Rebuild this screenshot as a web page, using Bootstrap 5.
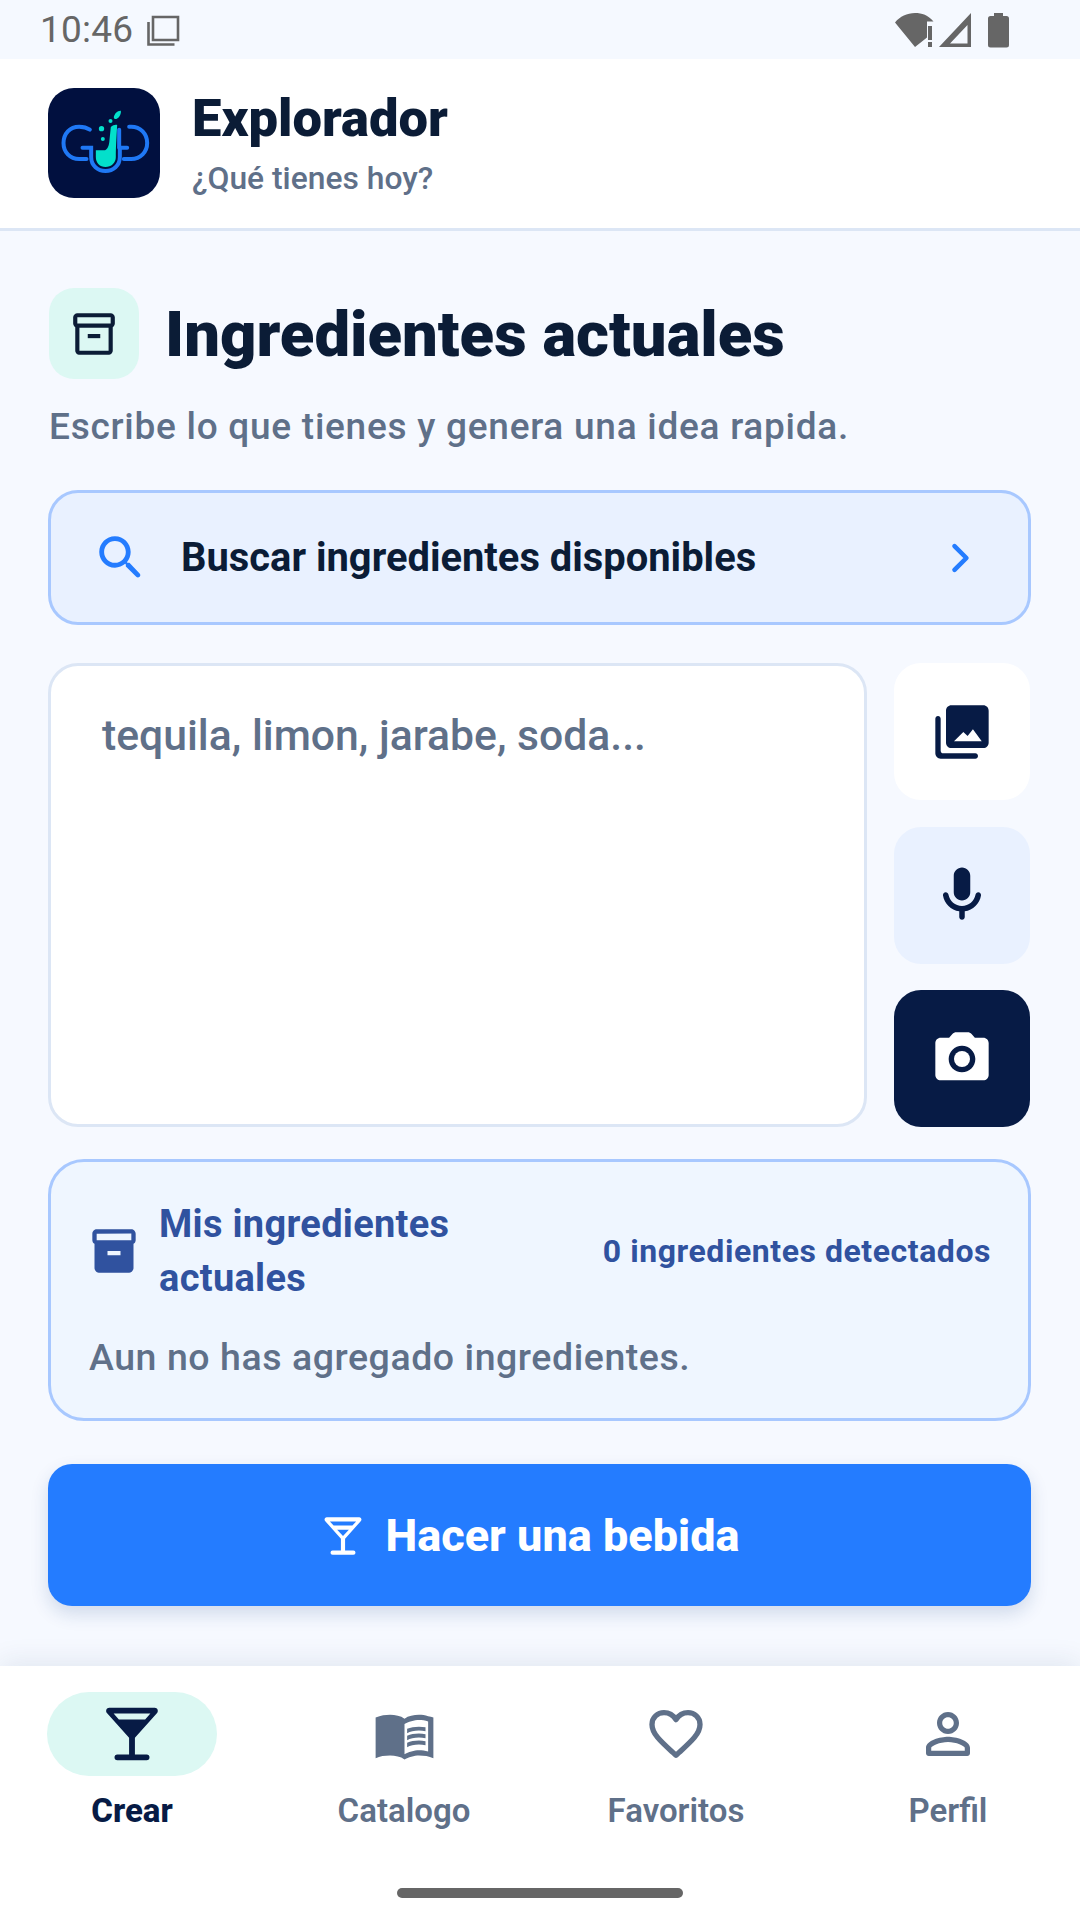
<!DOCTYPE html>
<html lang="es">
<head>
<meta charset="utf-8">
<title>Explorador</title>
<link href="https://cdn.jsdelivr.net/npm/bootstrap@5.3.0/dist/css/bootstrap.min.css" rel="stylesheet">
<style>
html,body{margin:0;height:1920px;overflow:hidden}
body{background:#f6f9ff;font-family:Roboto,"Noto Sans",sans-serif;color:#0b1c36}
svg{display:block;flex:none}
.screen{width:1080px;height:1920px}
.status-row{height:59px;background:#f5f9ff;color:#666;padding:0 71px 0 40px}
.status-time{font-size:37px;line-height:36px;margin-right:13px;letter-spacing:.2px}
.top-bar{height:172px;background:#fff;border-bottom:3px solid #dce6f5;padding:0 48px 0 48px;gap:32px}
.logo-box{width:112px;height:110px;border-radius:26px;background:#01103f;margin-top:-2px}
.top-title{font-size:52.500px;font-weight:900;line-height:60px;color:#0b1c36;margin:-3px 0 12px}
.top-sub{font-size:31.800px;font-weight:500;line-height:36px;color:#5f7089}
.work{padding:57px 49px 0 48px}
.head-ico{width:90px;height:91px;border-radius:25px;background:#dcf8f3;margin-left:1px}
.head-title{font-size:63.400px;font-weight:900;line-height:70px;color:#0b1c36;margin:0 0 0 26px}
.head-sub{font-size:37px;font-weight:500;line-height:44px;color:#5f7089;margin:26px 0 0 1px;letter-spacing:.74px}
.find-row{height:135px;margin-top:41px;padding:0 46px 0 41px;border:3px solid #a8c8ff;border-radius:30px;background:#e9f1ff}
.find-label{font-size:39.900px;font-weight:700;color:#0b1c36;margin-left:31px}
.input-row{margin-top:38px;gap:27px;height:464px}
.idea-input{width:819px;height:464px;border:3px solid #dce6f5;border-radius:30px;background:#fff;padding:45px 51px;font-size:42.700px;font-weight:500;line-height:48px;color:#5f7089;resize:none;box-shadow:none}
.idea-input::placeholder{color:#5f7089;opacity:1}
.tool-col{width:136px;height:464px;justify-content:space-between}
.tool-btn{width:136px;height:137px;padding:0;border:0;border-radius:27px}
.tool-a{background:#fff}
.tool-b{background:#e9f1ff}
.tool-c{background:#071b45}
.info-box{height:262px;margin-top:32px;border:3px solid #a8c8ff;border-radius:36px;background:#eff6ff;padding:35px 37px 0 37px}
.info-title{width:362px;font-size:38px;font-weight:700;line-height:54px;color:#30529f;margin-left:19px;letter-spacing:.3px}
.info-count{font-size:32px;font-weight:700;color:#30529f;letter-spacing:.55px}
.info-empty{font-size:37.500px;font-weight:500;line-height:44px;color:#5f7089;margin:30px 0 0 1px;letter-spacing:.55px}
.make-btn{height:142px;margin-top:43px;width:100%;border:0;border-radius:24px;background:#247cff;color:#fff;font-size:45px;font-weight:800;gap:18px;padding:1px 22px 0 0;box-shadow:0 8px 18px rgba(20,60,130,.16)}
.make-btn:hover,.make-btn:active{background:#247cff!important;color:#fff!important}
.tab-bar{height:254px;background:#fff;box-shadow:0 -4px 26px rgba(15,40,90,.09);padding-top:26px;position:relative;overflow:hidden}
.tab-grid{display:grid;grid-template-columns:repeat(4,272px);width:1088px;margin-left:-4px}
.tab-ico{height:84px;width:100%}
.tab-pill{width:170px;background:#dcf8f3;border-radius:42px}
.tab-name{font-size:33px;font-weight:600;line-height:40px;color:#5f7089;margin-top:15px}
.tab-on{color:#071b45;font-weight:800}
.home-line{position:absolute;left:397px;top:222px;width:286px;height:10px;border-radius:5px;background:#666}
</style>
</head>
<body>
<div class="screen d-flex flex-column">
  <div class="status-row d-flex align-items-center">
    <span class="status-time">10:46</span>
    <svg width="34" height="34" viewBox="0 0 34 34" fill="none" stroke="#666" stroke-width="2.6"><path d="M7 4h25v23H7z"/><path d="M2.500 9v22.500h26"/></svg>
    <div class="ms-auto d-flex align-items-center">
      <svg width="77" height="36" viewBox="0 0 77 36" fill="#666"><path d="M0 10.500C5 4.500 12 1 20 1c7 0 13 2 18.500 8.500H32V25.500L20 35z"/><rect x="33" y="14" width="4" height="14"/><rect x="33" y="30" width="4" height="5"/><path fill-rule="evenodd" d="M44 35L76 1v34zM55 31.500h17.500V13z"/></svg>
      <svg class="ms-3" width="21" height="36" viewBox="0 0 21 36" fill="#666"><path d="M6 1h9v3h3.500A2.500 2.500 0 0 1 21 6.500V33a2.500 2.500 0 0 1-2.500 2.500h-16A2.500 2.500 0 0 1 0 33V6.500A2.500 2.500 0 0 1 2.500 4H6z"/></svg>
    </div>
  </div>

  <header class="top-bar d-flex align-items-center">
    <div class="logo-box d-flex align-items-center justify-content-center">
      <svg width="112" height="110" viewBox="25 25 335 330" fill="none">
        <g stroke="#1f78f5" stroke-width="12" stroke-linecap="round">
          <path d="M150 150C140 143 128 141 118 141C90 141 71 163 71 190C71 217 90 238 118 238H140"/>
          <path d="M268 141H274C302 141 322 163 322 190C322 217 302 238 274 238H252"/>
          <path d="M128 204H154V232C154 258 174 274 197 274C220 274 240 258 240 232V204H262"/>
          <path d="M238 150V204"/>
        </g>
        <path fill="#03e0cb" d="M168 212H192C203 212 208 198 209 180L213 142C219 136 228 134 232 136L229 190C228 210 228 222 228 232C228 250 214 262 197 262C180 262 168 250 168 232z"/>
        <path fill="#03e0cb" d="M222 112C223 103 233 92 243 93C245 104 236 118 226 118C223 118 222 115 222 112z"/>
        <circle cx="212" cy="124" r="6" fill="#03e0cb"/><circle cx="185" cy="147" r="8" fill="#03e0cb"/><circle cx="189" cy="178" r="6" fill="#03e0cb"/>
      </svg>
    </div>
    <div>
      <h1 class="top-title">Explorador</h1>
      <div class="top-sub">¿Qué tienes hoy?</div>
    </div>
  </header>

  <main class="work flex-grow-1">
    <div class="d-flex align-items-center">
      <div class="head-ico d-flex align-items-center justify-content-center">
        <svg width="50" height="50" viewBox="0 0 24 24" fill="#0b1c36"><path d="M20 2H4c-1 0-2 .9-2 2v3.010c0 .72.43 1.340 1 1.690V20c0 1.100 1.100 2 2 2h14c.9 0 2-.9 2-2V8.700c.57-.35 1-.97 1-1.690V4c0-1.100-1-2-2-2zm-1 18H5V9h14v11zm1-13H4V4h16v3z"/><path d="M9 12h6v2H9z"/></svg>
      </div>
      <h2 class="head-title">Ingredientes actuales</h2>
    </div>
    <p class="head-sub">Escribe lo que tienes y genera una idea rapida.</p>

    <div class="find-row d-flex align-items-center">
      <svg width="58" height="58" viewBox="0 0 24 24" fill="#247cff"><path d="M15.500 14h-.79l-.28-.27C15.410 12.590 16 11.110 16 9.500 16 5.910 13.090 3 9.500 3S3 5.910 3 9.500 5.910 16 9.500 16c1.610 0 3.090-.59 4.230-1.570l.27.28v.79l4.300 4.290c.39.39 1.010.39 1.400 0 .39-.39.39-1.010 0-1.400L15.500 14zm-6 0C7.010 14 5 11.990 5 9.500S7.010 5 9.500 5 14 7.010 14 9.500 11.990 14 9.500 14z"/></svg>
      <span class="find-label">Buscar ingredientes disponibles</span>
      <svg class="ms-auto" width="44" height="44" viewBox="0 0 24 24" fill="none" stroke="#247cff" stroke-width="2.500" stroke-linecap="round" stroke-linejoin="round"><path d="M9 5.500l6.500 6.500L9 18.500"/></svg>
    </div>

    <div class="input-row d-flex">
      <textarea class="idea-input form-control" placeholder="tequila, limon, jarabe, soda..."></textarea>
      <div class="tool-col d-flex flex-column">
        <button class="tool-btn tool-a btn d-flex align-items-center justify-content-center" type="button" aria-label="Galeria">
          <svg width="64" height="64" viewBox="0 0 24 24" fill="#071b45"><path fill-rule="evenodd" d="M8 2h12c1.100 0 2 .9 2 2v12c0 1.100-.9 2-2 2H8c-1.100 0-2-.9-2-2V4c0-1.100.9-2 2-2zM9 15.500h10.400l-3.300-4.500-2 2.500-1.600-1.500z"/><path d="M3 6c.55 0 1 .45 1 1v12c0 .55.45 1 1 1h12c.55 0 1 .45 1 1s-.45 1-1 1H4c-1.100 0-2-.9-2-2V7c0-.55.45-1 1-1z"/></svg>
        </button>
        <button class="tool-btn tool-b btn d-flex align-items-center justify-content-center" type="button" aria-label="Microfono">
          <svg width="66" height="66" viewBox="0 0 24 24" fill="#071b45"><path d="M12 14c1.660 0 3-1.340 3-3V5c0-1.660-1.340-3-3-3S9 3.340 9 5v6c0 1.660 1.340 3 3 3zm5.910-3c-.49 0-.9.360-.98.850C16.520 14.200 14.470 16 12 16s-4.520-1.800-4.930-4.150c-.08-.49-.49-.85-.98-.85-.61 0-1.090.54-1 1.140.49 3 2.890 5.350 5.910 5.780V20c0 .55.45 1 1 1s1-.45 1-1v-2.080c3.020-.43 5.420-2.780 5.910-5.780.1-.6-.39-1.140-1-1.140z"/></svg>
        </button>
        <button class="tool-btn tool-c btn d-flex align-items-center justify-content-center" type="button" aria-label="Camara">
          <svg width="64" height="64" viewBox="0 0 24 24" fill="#fff"><circle cx="12" cy="12" r="3"/><path d="M20 4h-3.170l-1.240-1.350c-.37-.41-.91-.65-1.470-.65H9.880c-.56 0-1.100.24-1.480.65L7.170 4H4c-1.100 0-2 .9-2 2v12c0 1.100.9 2 2 2h16c1.100 0 2-.9 2-2V6c0-1.100-.9-2-2-2zm-8 13c-2.760 0-5-2.240-5-5s2.240-5 5-5 5 2.240 5 5-2.240 5-5 5z"/></svg>
        </button>
      </div>
    </div>

    <section class="info-box">
      <div class="d-flex align-items-center">
        <svg width="52" height="52" viewBox="0 0 24 24" fill="#30529f"><path d="M20 2H4c-1 0-2 .9-2 2v3.010c0 .72.43 1.340 1 1.690V20c0 1.100 1.100 2 2 2h14c.9 0 2-.9 2-2V8.700c.57-.35 1-.97 1-1.690V4c0-1.100-1-2-2-2zm-5 12H9v-2h6v2zm5-7H4V4l16-.02V7z"/></svg>
        <div class="info-title">Mis ingredientes actuales</div>
        <div class="info-count ms-auto">0 ingredientes detectados</div>
      </div>
      <div class="info-empty">Aun no has agregado ingredientes.</div>
    </section>

    <button class="make-btn btn d-flex align-items-center justify-content-center" type="button">
      <svg width="50" height="50" viewBox="0 0 24 24" fill="#fff"><path fill-rule="evenodd" d="M4.200 3h15.600c.9 0 1.400 1.100.8 1.800L13 13.300V19h4a1 1 0 0 1 0 2H7a1 1 0 0 1 0-2h4v-5.700L3.400 4.800C2.800 4.100 3.300 3 4.200 3zM5.700 5l1.800 2h9l1.800-2zM9.200 9L12 12l2.800-3z"/></svg>
      <span>Hacer una bebida</span>
    </button>
  </main>

  <nav class="tab-bar">
    <div class="tab-grid">
    <a class="d-flex flex-column align-items-center text-decoration-none" href="#">
      <span class="tab-ico tab-pill d-flex align-items-center justify-content-center">
        <svg width="70" height="70" viewBox="0 0 24 24" fill="#071b45"><path fill-rule="evenodd" d="M4.200 3h15.600c.9 0 1.400 1.100.8 1.800L13 13.300V19h4a1 1 0 0 1 0 2H7a1 1 0 0 1 0-2h4v-5.700L3.400 4.800C2.800 4.100 3.300 3 4.200 3zM5.700 5l1.800 2h9l1.800-2z"/></svg>
      </span>
      <span class="tab-name tab-on">Crear</span>
    </a>
    <a class="d-flex flex-column align-items-center text-decoration-none" href="#">
      <span class="tab-ico d-flex align-items-center justify-content-center">
        <svg width="63" height="63" viewBox="0 0 24 24" fill="#5f7089"><path d="M21 5c-1.110-.35-2.330-.5-3.500-.5-1.950 0-4.050.4-5.500 1.500-1.450-1.100-3.550-1.500-5.500-1.500-1.800 0-3.500.3-5.500 1v15.500c1.600-.7 3.500-1 5.500-1 1.950 0 4.050.4 5.500 1.500 1.350-.85 3.800-1.500 5.500-1.500 1.900 0 3.800.3 5.500 1V5.500c-.6-.2-1.300-.35-2-.5zm0 13.500c-1.100-.35-2.300-.5-3.500-.5-1.700 0-4.150.65-5.500 1.500V8c1.350-.85 3.800-1.500 5.500-1.500 1.200 0 2.400.15 3.500.5v11.500z"/><path d="M17.500 10.500c.88 0 1.730.09 2.500.26V9.240c-.79-.15-1.640-.24-2.500-.24-1.700 0-3.240.29-4.500.83v1.660c1.130-.64 2.700-.99 4.500-.99zM13 12.490v1.660c1.130-.64 2.700-.99 4.500-.99.88 0 1.730.09 2.500.26V11.900c-.79-.15-1.640-.24-2.500-.24-1.700 0-3.240.3-4.500.83zM17.500 14.330c-1.700 0-3.240.29-4.500.83v1.660c1.130-.64 2.700-.99 4.500-.99.88 0 1.730.09 2.500.26v-1.520c-.79-.16-1.640-.24-2.500-.24z"/></svg>
      </span>
      <span class="tab-name">Catalogo</span>
    </a>
    <a class="d-flex flex-column align-items-center text-decoration-none" href="#">
      <span class="tab-ico d-flex align-items-center justify-content-center">
        <svg width="64" height="64" viewBox="0 0 24 24" fill="none" stroke="#5f7089" stroke-width="2" stroke-linejoin="round"><path d="M12 20l-1.200-1.100C6.300 14.800 3 11.900 3 8.400 3 5.700 5.100 4 7.500 4c1.800 0 3.500 1 4.500 2.600C13 5 14.700 4 16.500 4 18.900 4 21 5.700 21 8.400c0 3.500-3.300 6.400-7.800 10.500z"/></svg>
      </span>
      <span class="tab-name">Favoritos</span>
    </a>
    <a class="d-flex flex-column align-items-center text-decoration-none" href="#">
      <span class="tab-ico d-flex align-items-center justify-content-center">
        <svg width="66" height="66" viewBox="0 0 24 24" fill="#5f7089"><path d="M12 5.900c1.160 0 2.100.94 2.100 2.100s-.94 2.100-2.100 2.100S9.900 9.160 9.900 8s.94-2.100 2.100-2.100m0 9c2.970 0 6.100 1.460 6.100 2.100v1.100H5.900V17c0-.64 3.130-2.100 6.100-2.100M12 4C9.790 4 8 5.790 8 8s1.790 4 4 4 4-1.790 4-4-1.790-4-4-4zm0 9c-2.670 0-8 1.340-8 4v2c0 .55.45 1 1 1h14c.55 0 1-.45 1-1v-2c0-2.660-5.330-4-8-4z"/></svg>
      </span>
      <span class="tab-name">Perfil</span>
    </a>
    </div>
    <div class="home-line"></div>
  </nav>
</div>
</body>
</html>
